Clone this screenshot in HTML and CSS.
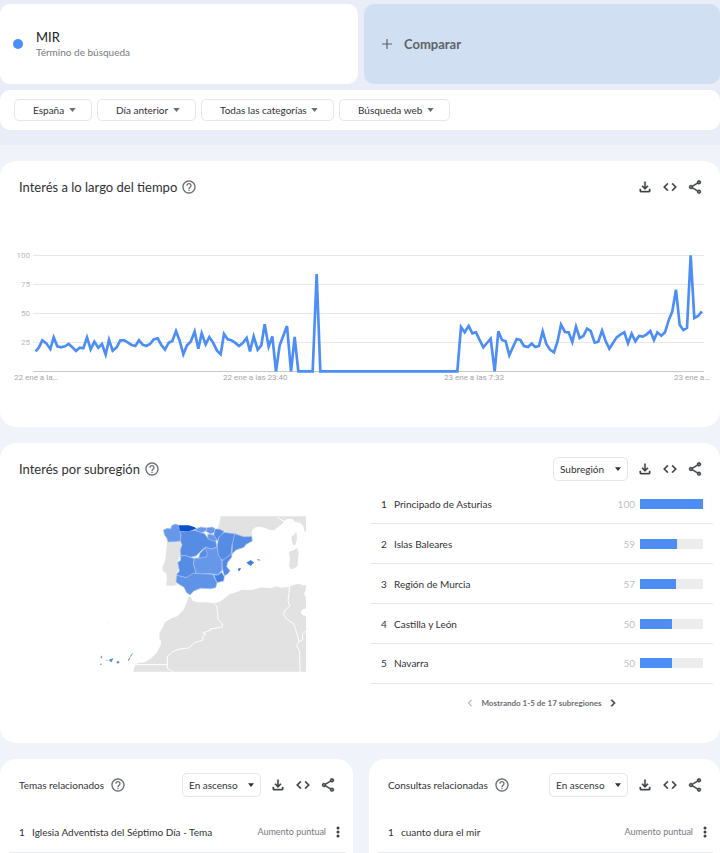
FILE: index.html
```html
<!DOCTYPE html>
<html lang="es">
<head>
<meta charset="utf-8">
<meta name="viewport" content="width=device-width, initial-scale=1">
<title>MIR - Explorar</title>
<link rel="stylesheet" href="styles.css">
</head>
<body>
<svg class="sprite" aria-hidden="true">
  <symbol id="download" viewBox="0 0 24 24"><path d="M18 15v3H6v-3H4v3c0 1.1.9 2 2 2h12c1.1 0 2-.9 2-2v-3h-2zm-1-4-1.41-1.41L13 12.17V4h-2v8.17L8.41 9.59 7 11l5 5 5-5z"/></symbol>
  <symbol id="code" viewBox="0 0 24 24"><path d="M9.4 16.6 4.8 12l4.6-4.6L8 6l-6 6 6 6 1.4-1.4zm5.2 0 4.6-4.6-4.6-4.6L16 6l6 6-6 6-1.4-1.4z"/></symbol>
  <symbol id="share" viewBox="0 0 24 24"><path d="M18 16.08c-.76 0-1.44.3-1.96.77L8.91 12.7c.05-.23.09-.46.09-.7s-.04-.47-.09-.7l7.05-4.11c.54.5 1.25.81 2.04.81 1.66 0 3-1.34 3-3s-1.34-3-3-3-3 1.34-3 3c0 .24.04.47.09.7L8.04 9.81C7.5 9.31 6.79 9 6 9c-1.66 0-3 1.34-3 3s1.34 3 3 3c.79 0 1.5-.31 2.04-.81l7.12 4.16c-.05.21-.08.43-.08.65 0 1.61 1.31 2.92 2.92 2.92s2.92-1.31 2.92-2.92-1.31-2.92-2.92-2.92zM18 4c.55 0 1 .45 1 1s-.45 1-1 1-1-.45-1-1 .45-1 1-1zM6 13c-.55 0-1-.45-1-1s.45-1 1-1 1 .45 1 1-.45 1-1 1zm12 7.02c-.55 0-1-.45-1-1s.45-1 1-1 1 .45 1 1-.45 1-1 1z"/></symbol>
  <symbol id="help" viewBox="0 0 24 24"><path d="M11 18h2v-2h-2v2zm1-16C6.48 2 2 6.48 2 12s4.48 10 10 10 10-4.48 10-10S17.52 2 12 2zm0 18c-4.41 0-8-3.59-8-8s3.59-8 8-8 8 3.59 8 8-3.59 8-8 8zm0-14c-2.21 0-4 1.79-4 4h2c0-1.1.9-2 2-2s2 .9 2 2c0 2-3 1.75-3 5h2c0-2.25 3-2.5 3-5 0-2.21-1.79-4-4-4z"/></symbol>
  <symbol id="more" viewBox="0 0 24 24"><circle cx="12" cy="4" r="3"/><circle cx="12" cy="12" r="3"/><circle cx="12" cy="20" r="3"/></symbol>
  <symbol id="caret" viewBox="0 0 8 5"><path d="M0 0h8L4 5z"/></symbol>
  <symbol id="left" viewBox="0 0 24 24"><path d="M15.4 7.4 14 6l-6 6 6 6 1.4-1.4L10.8 12z"/></symbol>
  <symbol id="right" viewBox="0 0 24 24"><path d="M8.6 16.6 13.2 12 8.6 7.4 10 6l6 6-6 6z" stroke="currentColor"/></symbol>
  <symbol id="plus" viewBox="0 0 10 10"><path d="M4.4 0h1.2v4.4H10v1.2H5.6V10H4.4V5.6H0V4.4h4.4z"/></symbol>
</svg>

<header class="explore">
  <div class="terms">
    <div class="term">
      <span class="dot"></span>
      <div>
        <div class="term-name">MIR</div>
        <div class="term-type">Término de búsqueda</div>
      </div>
    </div>
    <button class="compare" type="button"><svg class="plus"><use href="#plus"/></svg>Comparar</button>
  </div>
  <div class="filters">
    <div class="picker filter"><select aria-label="Ubicación"><option>España</option></select><svg class="caret"><use href="#caret"/></svg></div>
    <div class="picker filter"><select aria-label="Periodo"><option>Día anterior</option></select><svg class="caret"><use href="#caret"/></svg></div>
    <div class="picker filter"><select aria-label="Categoría"><option>Todas las categorías</option></select><svg class="caret"><use href="#caret"/></svg></div>
    <div class="picker filter"><select aria-label="Tipo de búsqueda"><option>Búsqueda web</option></select><svg class="caret"><use href="#caret"/></svg></div>
  </div>
</header>

<main class="widgets">
  <section class="card">
    <div class="card-head">
      <h2>Interés a lo largo del tiempo</h2>
      <button class="icon help" type="button" aria-label="Ayuda"><svg><use href="#help"/></svg></button>
      <div class="actions">
        <button class="icon" type="button" aria-label="Descargar"><svg><use href="#download"/></svg></button>
        <button class="icon" type="button" aria-label="Insertar"><svg><use href="#code"/></svg></button>
        <button class="icon" type="button" aria-label="Compartir"><svg><use href="#share"/></svg></button>
      </div>
    </div>
    <svg class="chart" viewBox="0 0 720 150" role="img" aria-label="Interés a lo largo del tiempo">
      <path class="grid" d="M33 15.5H704M33 44.5H704M33 73.5H704M33 102.5H704"/>
      <path class="axis" d="M33 131.5H704"/>
      <g class="tick-y">
        <text x="30" y="18">100</text><text x="30" y="47">75</text><text x="30" y="76">50</text><text x="30" y="105">25</text>
      </g>
      <g class="tick-x">
        <text x="14" y="140">22 ene a la…</text><text x="223" y="140">22 ene a las 23:40</text><text x="444" y="140">23 ene a las 7:32</text><text x="674" y="140">23 ene a…</text>
      </g>
      <polyline class="series" transform="scale(.33333)" points="107,334 117,322 127,301 139,310 151,327 161,292 172,319 183,322 195,319 206,312 217,322 228,333 239,323 250,325 261,292 272,328 283,305 295,323 306,312 317,344 327,299 338,332 350,322 361,301 373,301 384,308 395,315 406,318 417,301 428,314 439,318 450,312 461,298 473,295 484,315 495,329 506,308 517,303 528,273 539,302 550,343 561,316 572,305 584,275 595,326 605,280 617,313 628,291 639,307 651,332 662,343 672,282 683,298 694,301 705,308 717,318 728,309 740,294 750,334 761,289 773,329 784,316 794,253 806,320 817,289 828,394 839,316 850,287 861,258 873,394 884,291 895,394 938,394 950,102 961,394 1372,394 1383,261 1394,277 1406,258 1417,280 1428,277 1439,300 1450,322 1461,309 1472,296 1484,394 1495,274 1506,300 1517,304 1528,346 1539,321 1550,297 1561,300 1572,318 1584,321 1595,311 1606,321 1617,318 1628,274 1639,312 1650,329 1662,337 1673,303 1683,254 1695,276 1706,277 1717,306 1728,260 1739,294 1750,288 1761,266 1772,273 1784,308 1795,305 1806,272 1817,303 1828,326 1839,309 1850,292 1861,284 1873,277 1884,310 1895,281 1906,304 1917,288 1928,290 1940,283 1951,273 1962,300 1972,277 1984,287 1995,277 2006,241 2017,214 2028,149 2039,254 2050,270 2061,264 2072,46 2083,234 2094,228 2106,214"/>
    </svg>
  </section>

  <section class="card">
    <div class="card-head">
      <h2>Interés por subregión</h2>
      <button class="icon help" type="button" aria-label="Ayuda"><svg><use href="#help"/></svg></button>
      <div class="actions">
        <div class="picker"><select aria-label="Resolución"><option>Subregión</option></select><svg class="caret"><use href="#caret"/></svg></div>
        <button class="icon" type="button" aria-label="Descargar"><svg><use href="#download"/></svg></button>
        <button class="icon" type="button" aria-label="Insertar"><svg><use href="#code"/></svg></button>
        <button class="icon" type="button" aria-label="Compartir"><svg><use href="#share"/></svg></button>
      </div>
    </div>
    <div class="regions">
      <div class="map-area">
        <svg class="map" viewBox="0 0 720 540" role="img" aria-label="Mapa de España por subregión">
          <g class="land">
            <path d="M422 34H678V80L673 78 670 62 660 54 645 50 637 42 624 41 612 48 606 58 594 66 582 76 569 75 555 69 540 65 528 66 518 73 515 82 517 94 490 95 462 86 440 82 424 76 413 70 418 56Z"/>
            <path d="M647 80 650 84 651 102 646 120 640 121 635 108 634 95 645 88Z"/>
            <path d="M651 129 656 142 654 162 653 182 644 190 634 193 627 184 630 162 626 140 640 136Z"/>
            <path d="M262 106 280 111 300 107 304 120 302 150 292 170 296 190 288 215 290 240 274 243 258 241 261 220 258 205 249 198 247 188 256 163 259 135Z"/>
            <path d="M160 500 165 482 172 474 195 472 214 459 232 440 242 420 244 409 238 402 239 383 249 366 255 351 275 340 292 334 312 313 319 294 326 275 333 276 336 286 350 292 378 292 398 295 418 291 432 281 448 268 470 261 486 254 515 255 545 247 572 250 589 244 602 248 628 246 642 239 659 236 666 241 678 241V252L672 266 678 280V310L667 314 662 323 669 331 678 333V500Z"/>
            <path class="faint" d="M80 353l5 2 4-1-4 2z"/>
          </g>
          <path class="border" d="M594 36l8 8 10 4M167 479H262M280 500 262 490V454L278 440 300 432 326 429 344 413 370 405 367 396 378 386 369 383 391 376 390 372 427 366V356L414 345 413 320 410 304 403 295M628 246 627 266 624 286 629 304 615 316 610 328 622 344 640 355 646 370 652 390 657 410 650 421 659 440 660 500M657 410 668 405 667 388 678 377"/>
          <g class="es">
            <path class="t1" d="M250 75 262 70 272 71 276 61 287 57 297 61 299 76 303 91 301 108 286 110 264 111 260 98 254 91Z"/>
            <path class="t2" d="M299 80 346 76 374 86 384 100 407 106 411 127 393 132 376 127 362 139 348 153 330 157 315 151 302 153 301 134 306 119 301 108 303 91Z"/>
            <path class="t9" d="M297 61 326 61 343 66 349 71 340 74 326 79 299 79Z"/>
            <path class="t1" d="M349 71 362 66 381 69 376 79 365 83 346 76Z"/>
            <path class="t1" d="M381 68 397 66 406 72 403 82 392 87 378 79Z"/>
            <path class="t2" d="M406 72 417 72 432 79 426 91 416 98 414 107 401 99 402 85Z"/>
            <path class="t1" d="M383 87 401 90 411 105 402 109 384 101Z"/>
            <path class="t2" d="M432 82 464 86 464 100 456 120 454 146 444 155 434 167 415 160 411 127 416 98Z"/>
            <path class="t2" d="M464 86 492 95 515 94 517 108 497 119 492 127 468 135 456 147 457 118Z"/>
            <path class="t1" d="M376 127 393 132 411 127 415 150 426 168 426 196 414 210 391 206 360 207 348 205 340 178 342 160 362 158Z"/>
            <path class="t2" d="M376 129 382 146 379 156 366 158 356 160 360 145Z"/>
            <path class="t2" d="M302 153 315 151 330 157 342 160 340 178 348 202 332 215 318 218 293 212 290 208 298 198 293 172 302 166Z"/>
            <path class="t3" d="M456 143 455 157 443 172 440 185 450 197 443 207 433 212 427 190 426 168 434 162 444 155Z"/>
            <path class="t4" d="M401 210 414 210 425 202 433 215 431 228 411 233Z"/>
            <path class="t5" d="M290 211 318 218 340 205 398 208 411 233 407 248 392 251 362 250 341 258 330 270 319 262 312 247 294 236 288 230Z"/>
            <path class="t4 isle" d="M499 172l8-3 5-4 5 4 6 4-6 4-4 6-7-4zM474 192l5-4 4 2-4 8-5-1zM529 164l9-1 3 4-6-1z"/>
            <path class="t3 isle" d="M63 451l3 5-1 5-3-3zM60 476h4l1 3-4 1zM87 464l6-2 6-3-1 6-4 7-6-5zM78 466l4-2v4zM110 470l4-3 5 5-5 4-4-3zM145 463l3-4 3-2-3 8-5 4zM151 452l5-6 4-2-5 7-3 6z"/>
          </g>
        </svg>
      </div>
      <div class="region-list">
        <table class="region-table">
          <tr><td class="rank">1</td><td>Principado de Asturias</td><td class="value">100</td><td class="bar-cell"><div class="bar"><div class="fill" style="width:100%"></div></div></td></tr>
          <tr><td class="rank">2</td><td>Islas Baleares</td><td class="value">59</td><td class="bar-cell"><div class="bar"><div class="fill" style="width:59%"></div></div></td></tr>
          <tr><td class="rank">3</td><td>Región de Murcia</td><td class="value">57</td><td class="bar-cell"><div class="bar"><div class="fill" style="width:57%"></div></div></td></tr>
          <tr><td class="rank">4</td><td>Castilla y León</td><td class="value">50</td><td class="bar-cell"><div class="bar"><div class="fill" style="width:50%"></div></div></td></tr>
          <tr><td class="rank">5</td><td>Navarra</td><td class="value">50</td><td class="bar-cell"><div class="bar"><div class="fill" style="width:50%"></div></div></td></tr>
        </table>
        <div class="pager">
          <button class="icon" type="button" aria-label="Anterior" disabled><svg><use href="#left"/></svg></button>
          <span>Mostrando 1-5 de 17 subregiones</span>
          <button class="icon" type="button" aria-label="Siguiente"><svg><use href="#right"/></svg></button>
        </div>
      </div>
    </div>
  </section>

  <div class="related">
    <section class="card">
      <div class="card-head">
        <h3>Temas relacionados</h3>
        <button class="icon help" type="button" aria-label="Ayuda"><svg><use href="#help"/></svg></button>
        <div class="actions">
          <div class="picker"><select aria-label="Ordenar temas"><option>En ascenso</option></select><svg class="caret"><use href="#caret"/></svg></div>
          <button class="icon" type="button" aria-label="Descargar"><svg><use href="#download"/></svg></button>
          <button class="icon" type="button" aria-label="Insertar"><svg><use href="#code"/></svg></button>
          <button class="icon" type="button" aria-label="Compartir"><svg><use href="#share"/></svg></button>
        </div>
      </div>
      <ol class="queries">
        <li><span class="rank">1</span><a href="#temas">Iglesia Adventista del Séptimo Día - Tema</a><span class="rise">Aumento puntual</span><button class="icon more" type="button" aria-label="Más"><svg><use href="#more"/></svg></button></li>
      </ol>
    </section>
    <section class="card">
      <div class="card-head">
        <h3>Consultas relacionadas</h3>
        <button class="icon help" type="button" aria-label="Ayuda"><svg><use href="#help"/></svg></button>
        <div class="actions">
          <div class="picker"><select aria-label="Ordenar consultas"><option>En ascenso</option></select><svg class="caret"><use href="#caret"/></svg></div>
          <button class="icon" type="button" aria-label="Descargar"><svg><use href="#download"/></svg></button>
          <button class="icon" type="button" aria-label="Insertar"><svg><use href="#code"/></svg></button>
          <button class="icon" type="button" aria-label="Compartir"><svg><use href="#share"/></svg></button>
        </div>
      </div>
      <ol class="queries">
        <li><span class="rank">1</span><a href="#consultas">cuanto dura el mir</a><span class="rise">Aumento puntual</span><button class="icon more" type="button" aria-label="Más"><svg><use href="#more"/></svg></button></li>
      </ol>
    </section>
  </div>
</main>
</body>
</html>
```
FILE: styles.css
```css
* { box-sizing: border-box; }

body {
  margin: 0;
  background: #f0f3f9;
  color: #303134;
  font: 10px/14px Lato, "Liberation Sans", sans-serif;
}

button, select { font: inherit; color: inherit; margin: 0; }
button { border: 0; padding: 0; background: none; cursor: pointer; }
svg { display: block; fill: currentColor; }
.sprite { position: absolute; width: 0; height: 0; }

/* Search terms and filters */
.explore { background: #e8edf7; padding: 4px 0 15px; }
.terms { display: grid; grid-template-columns: 358fr 356fr; gap: 6px; margin-bottom: 6px; }
.term, .compare { height: 80px; border-radius: 10px; display: flex; align-items: center; }
.term { background: #fff; padding-left: 13px; gap: 13px; }
.dot { width: 10px; height: 10px; border-radius: 50%; background: #4c8df6; }
.term-name { font-size: 13px; line-height: 16px; color: #202124; }
.term-type { color: #777a7e; }
.compare {
  background: #d0dff2;
  color: #5f6368;
  padding-left: 18px;
  gap: 12px;
  font-size: 13px;
  font-weight: 700;
}
.plus { width: 10px; height: 10px; }
.filters {
  background: #fff;
  border-radius: 10px;
  min-height: 40px;
  padding: 9px 14px;
  display: flex;
  flex-wrap: wrap;
  gap: 5px;
}

.picker { position: relative; }
.picker select {
  display: block;
  appearance: none;
  height: 24px;
  padding: 0 22px 0 6px;
  border: 1px solid #e4e6e9;
  border-radius: 5px;
  background: #fff;
}
.picker .caret {
  position: absolute;
  right: 7px;
  top: 10px;
  width: 6px;
  height: 4px;
  pointer-events: none;
}
.filter select { height: 22px; padding: 0 26px 0 18px; }
.filter .caret { right: 16px; top: 9px; width: 7px; color: #6b6e72; }

/* Widgets */
.widgets { padding-top: 16px; display: grid; gap: 16px; }
.card { background: #fff; border-radius: 16px; min-width: 0; }
.card-head {
  display: flex;
  align-items: center;
  height: 42px;
  padding: 15px 17px 5px 19px;
}
h2, h3 { margin: 0; font-weight: 400; }
h2 { font-size: 13px; line-height: 16px; }
h3 { font-size: 10px; line-height: 14px; }
.icon { width: 16px; height: 16px; flex: none; color: #3c4043; }
.icon svg { width: 16px; height: 16px; }
.actions .icon svg { stroke: currentColor; stroke-width: 0.5; }
.help { margin-left: 4px; color: #6b6e72; }
.actions { margin-left: auto; display: flex; align-items: center; gap: 9px; }

.chart { width: 100%; height: auto; margin: 37px 0; }
.grid { stroke: #e8e8e8; }
.axis { stroke: #c8c8c8; }
.tick-x, .tick-y { font: 8px Roboto, sans-serif; fill: #a6a6a6; }
.tick-y { text-anchor: end; fill: #bababa; }
.series { fill: none; stroke: #4c8df6; stroke-width: 8; stroke-linejoin: miter; }

.regions { display: grid; grid-template-columns: 370fr 350fr; padding-bottom: 21px; }
.map-area { display: flex; justify-content: center; padding: 20px 0 0 30px; }
.map { width: 240px; height: 180px; }
.land { fill: #e2e2e2; }
.border { fill: none; stroke: #fff; stroke-width: 3; }
.es { stroke: #a9c4f3; stroke-width: 2; stroke-linejoin: round; }
.t1 { fill: #6697e9; }
.t2 { fill: #578ce5; }
.t3 { fill: #5289e4; }
.t4 { fill: #4680df; }
.t5 { fill: #5f93e8; }
.t9 { fill: #0b50c8; stroke: none; }
.isle { stroke: none; }

.region-list { padding-right: 7px; }
.region-table { width: 100%; height: 199px; border-collapse: collapse; }
.region-table td { padding: 0; border-bottom: 1px solid #e6e7e9; }
.region-table .rank { width: 24px; padding-left: 11px; }
.region-table .value { text-align: right; color: #bdbfc2; padding-right: 5px; }
.bar-cell { width: 73px; }
.bar { width: 63px; height: 10px; background: #ececec; }
.fill { height: 100%; background: #4c8df6; }
.pager {
  height: 38px;
  display: flex;
  justify-content: center;
  align-items: center;
  gap: 3px;
  font-size: 8px;
  font-weight: 700;
  color: #6b6e72;
}
.pager .icon svg { width: 14px; height: 14px; margin: 1px; }
.pager .icon:disabled { color: #b5b7ba; }

.related { display: grid; grid-template-columns: 353fr 351fr; gap: 16px; }
.related .card { border-radius: 16px 16px 0 0; }
.related .help { margin-left: 6px; }
.queries { list-style: none; margin: 11px 7px 0 9px; padding: 0; }
.queries li {
  display: flex;
  align-items: center;
  height: 41px;
  padding-left: 10px;
  border-bottom: 1px solid #e6e7e9;
}
.queries .rank { width: 13px; }
.queries a { color: inherit; text-decoration: none; }
.rise { margin-left: auto; font-size: 9px; color: #777a7e; }
.more { margin-left: 4px; }
.more svg { width: 12px; height: 12px; margin: 2px; }
```
